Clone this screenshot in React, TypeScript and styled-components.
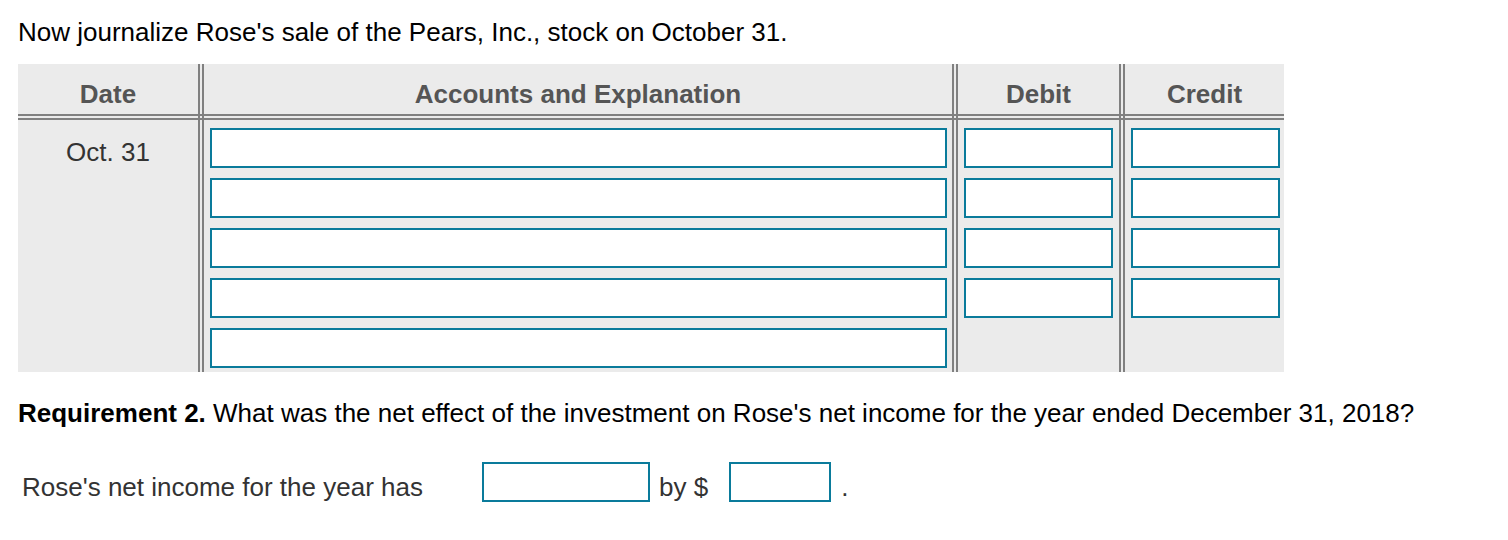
import React from 'react';
import styled, { createGlobalStyle } from 'styled-components';

// Local Variables
const GlobalStyle = createGlobalStyle`
  body {
    margin: 0;
    background: #ffffff;
    font-family: "Liberation Sans", Arial, sans-serif;
  }
`;

const lineGray = '#808080';
const cellGray = '#ebebeb';
const inputTeal = '#0a7b9b';

const Page = styled.div`
  padding: 17px 18px 0;
  font-size: 26px;
  color: #000000;
`;

const Prompt = styled.p`
  margin: 0 0 17px;
  line-height: 30px;
`;

const Ledger = styled.div`
  display: grid;
  grid-template-columns: 180px 6px 748px 6px 161px 6px 159px;
  grid-template-rows: 50px 6px 252px;
  width: 1266px;
  background: ${cellGray};
`;

const HeadCell = styled.div<{ $col: number }>`
  grid-column: ${({ $col }) => $col};
  grid-row: 1;
  display: flex;
  align-items: center;
  justify-content: center;
  padding-top: 10px;
  font-weight: 700;
  color: #555555;
`;

const VRule = styled.div<{ $col: number }>`
  grid-column: ${({ $col }) => $col};
  grid-row: 1 / 4;
  border-left: 2px solid ${lineGray};
  border-right: 2px solid ${lineGray};
  z-index: 1;
`;

const HRule = styled.div`
  grid-column: 1 / -1;
  grid-row: 2;
  border-top: 2px solid ${lineGray};
  border-bottom: 2px solid ${lineGray};
`;

const DateCell = styled.div`
  grid-column: 1;
  grid-row: 3;
  padding-top: 17px;
  line-height: 30px;
  text-align: center;
  color: #333333;
`;

const EntryColumn = styled.div<{ $col: number; $right: number }>`
  grid-column: ${({ $col }) => $col};
  grid-row: 3;
  display: flex;
  flex-direction: column;
  gap: 10px;
  padding: 8px ${({ $right }) => $right}px 0 6px;
`;

const EntryInput = styled.input`
  box-sizing: border-box;
  width: 100%;
  height: 40px;
  margin: 0;
  border: 2px solid ${inputTeal};
  border-radius: 0;
  background: #ffffff;
  font: inherit;
  outline: none;
`;

const Requirement = styled.p`
  margin: 26px 0 0;
  line-height: 30px;
`;

const AnswerRow = styled.div`
  display: flex;
  align-items: center;
  margin-top: 34px;
  padding-left: 4px;
  line-height: 30px;
  color: #333333;
`;

const RowText = styled.span<{ $left?: number; $right?: number }>`
  padding-top: 10px;
  margin: 0 ${({ $right }) => $right ?? 0}px 0 ${({ $left }) => $left ?? 0}px;
`;

const AnswerLabel = styled(RowText)`
  width: 460px;
`;

const InlineInput = styled(EntryInput)<{ $width: number }>`
  width: ${({ $width }) => $width}px;
`;

const accountRows = [0, 1, 2, 3, 4];
const amountRows = [0, 1, 2, 3];

// Component Definition
const App: React.FC = () => {
  return (
    <>
      <GlobalStyle />
      <Page>
        <Prompt>
          Now journalize Rose&apos;s sale of the Pears, Inc., stock on October 31.
        </Prompt>

        <Ledger>
          <HeadCell $col={1}>Date</HeadCell>
          <HeadCell $col={3}>Accounts and Explanation</HeadCell>
          <HeadCell $col={5}>Debit</HeadCell>
          <HeadCell $col={7}>Credit</HeadCell>

          <VRule $col={2} />
          <VRule $col={4} />
          <VRule $col={6} />
          <HRule />

          <DateCell>Oct. 31</DateCell>

          <EntryColumn $col={3} $right={5}>
            {accountRows.map((row) => (
              <EntryInput key={row} aria-label="Account" />
            ))}
          </EntryColumn>

          <EntryColumn $col={5} $right={6}>
            {amountRows.map((row) => (
              <EntryInput key={row} aria-label="Debit" />
            ))}
          </EntryColumn>

          <EntryColumn $col={7} $right={4}>
            {amountRows.map((row) => (
              <EntryInput key={row} aria-label="Credit" />
            ))}
          </EntryColumn>
        </Ledger>

        <Requirement>
          <b>Requirement 2.</b> What was the net effect of the investment on Rose&apos;s net
          income for the year ended December 31, 2018?
        </Requirement>

        <AnswerRow>
          <AnswerLabel>Rose&apos;s net income for the year has</AnswerLabel>
          <InlineInput $width={168} aria-label="Change" />
          <RowText $left={9} $right={21}>by $</RowText>
          <InlineInput $width={102} aria-label="Amount" />
          <RowText $left={10}>.</RowText>
        </AnswerRow>
      </Page>
    </>
  );
};

export default App;
